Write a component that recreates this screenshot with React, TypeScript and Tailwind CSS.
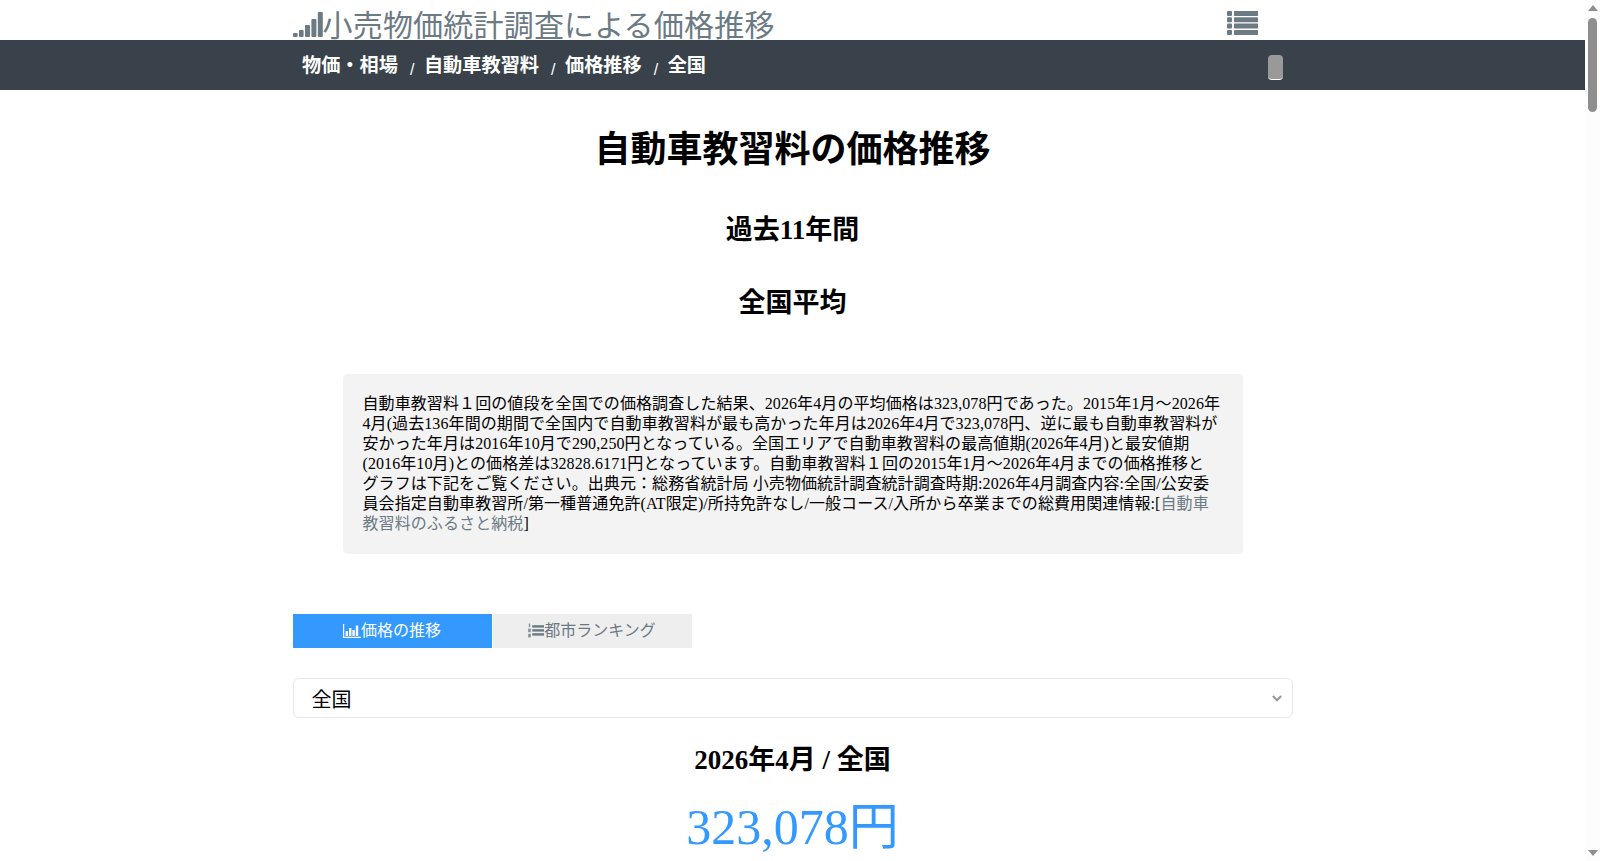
import React from 'react';

const ChartIcon: React.FC<{ className?: string }> = ({ className }) => (
  <svg viewBox="0 0 18 14" className={className} fill="currentColor">
    <path d="M0 0h1.2v12.8H18V14H0z" />
    <rect x="2.6" y="7" width="2.4" height="5" />
    <rect x="6" y="4" width="2.4" height="8" />
    <rect x="9.4" y="6" width="2.4" height="6" />
    <rect x="12.8" y="1.5" width="2.4" height="10.5" />
  </svg>
);

const RankIcon: React.FC<{ className?: string }> = ({ className }) => (
  <svg viewBox="0 0 16 15" className={className} fill="currentColor">
    <rect x="0.8" y="0.5" width="1.4" height="3.6" opacity="0.8" />
    <rect x="0.2" y="5.6" width="2.6" height="3.6" opacity="0.8" />
    <rect x="0.2" y="10.8" width="2.6" height="3.6" opacity="0.8" />
    <rect x="4.2" y="2.2" width="11.8" height="2.4" />
    <rect x="4.2" y="6.2" width="11.8" height="2.4" />
    <rect x="4.2" y="10.2" width="11.8" height="2.4" />
  </svg>
);

const SignalIcon = () => (
  <svg viewBox="0 0 30 25" className="w-[30px] h-[25px] shrink-0 mt-[12px]" fill="#6c7a84">
    <rect x="0" y="21" width="4.6" height="4" rx="1" />
    <rect x="6" y="18" width="4.6" height="7" rx="1" />
    <rect x="12" y="13" width="5" height="12" rx="1" />
    <rect x="18.4" y="7" width="5" height="18" rx="1" />
    <rect x="24.8" y="0" width="5" height="25" rx="1" />
  </svg>
);

const ListIcon = () => (
  <svg viewBox="0 0 31 24" className="w-[31px] h-[24px]" fill="#6c7a84">
    <rect x="0" y="0" width="5" height="5" rx="1" />
    <rect x="0" y="6.3" width="5" height="5" rx="1" />
    <rect x="0" y="12.6" width="5" height="5" rx="1" />
    <rect x="0" y="19" width="5" height="5" rx="1" />
    <rect x="7" y="0" width="24" height="5" rx="0.5" />
    <rect x="7" y="6.3" width="24" height="5" rx="0.5" />
    <rect x="7" y="12.6" width="24" height="5" rx="0.5" />
    <rect x="7" y="19" width="24" height="5" rx="0.5" />
  </svg>
);

// the browser's own scrollbar, hidden in the headless shot
const Scrollbar = () => (
  <aside className="w-[15px] shrink-0 h-full bg-[#fdfdfd] flex flex-col items-center">
    <svg viewBox="0 0 10 6" className="w-[10px] h-[6px] mt-[5px]" fill="#8e8e8e">
      <path d="M5 0l5 6H0z" />
    </svg>
    <div className="w-[9px] h-[94px] mt-[7px] rounded-full bg-[#8e8e8e]" />
    <svg viewBox="0 0 10 6" className="w-[10px] h-[6px] mt-auto mb-[5px]" fill="#8e8e8e">
      <path d="M0 0h10L5 6z" />
    </svg>
  </aside>
);

const crumbs = ['物価・相場', '自動車教習料', '価格推移', '全国'];

export default function App() {
  return (
    <div className="h-screen flex overflow-hidden bg-white text-black font-['Liberation_Serif','Noto_Sans_CJK_JP',serif]">
      <div className="flex-1 min-w-0">
        {/* Header */}
        <header className="w-[1000px] mx-auto h-10 flex justify-between overflow-hidden">
          <a className="flex items-start text-[30px] leading-[52px] text-[#6c7a84] font-['Liberation_Sans','Noto_Sans_CJK_JP',sans-serif]">
            <SignalIcon />
            <span className="tracking-[0.2px]">小売物価統計調査による価格推移</span>
          </a>
          <div className="mr-[35px] mt-[11px]">
            <ListIcon />
          </div>
        </header>

        <nav className="h-[50px] bg-[#39424a]">
          <div className="w-[1000px] mx-auto flex justify-between h-full">
            <ol className="flex items-start pt-[12px] pl-[9.5px] text-white font-bold text-[19.2px] leading-[28px] font-['Liberation_Sans','Noto_Sans_CJK_JP',sans-serif]">
              {crumbs.map((c, i) => (
                <li key={c} className="flex">
                  {i > 0 && <span className="pl-[12px] pr-[9.5px] font-normal text-[16px] mt-[4px]">/</span>}
                  <span>{c}</span>
                </li>
              ))}
            </ol>
            <div className="mr-[10px] mt-[15px] w-[15px] h-[25px] rounded-[4px] bg-[#999999] border-b border-white" />
          </div>
        </nav>

        <main className="w-[1000px] mx-auto">
          <h1 className="text-center font-bold text-[36px] leading-[42px] pt-[39px]">自動車教習料の価格推移</h1>
          <h2 className="text-center font-bold text-[27px] leading-[31px] mt-[44px]">過去11年間</h2>
          <h2 className="text-center font-bold text-[27px] leading-[31px] mt-[42px]">全国平均</h2>

          <p className="w-[900px] mx-auto mt-[55px] px-[20px] py-[20px] rounded-[5px] bg-[#f3f3f3] text-[16px] leading-[20px] tracking-[0.09px] whitespace-nowrap">
            自動車教習料１回の値段を全国での価格調査した結果、2026年4月の平均価格は323,078円であった。2015年1月～2026年<br />
            4月(過去136年間の期間で全国内で自動車教習料が最も高かった年月は2026年4月で323,078円、逆に最も自動車教習料が<br />
            安かった年月は2016年10月で290,250円となっている。全国エリアで自動車教習料の最高値期(2026年4月)と最安値期<br />
            (2016年10月)との価格差は32828.6171円となっています。自動車教習料１回の2015年1月～2026年4月までの価格推移と<br />
            グラフは下記をご覧ください。出典元：総務省統計局 小売物価統計調査統計調査時期:2026年4月調査内容:全国/公安委<br />
            員会指定自動車教習所/第一種普通免許(AT限定)/所持免許なし/一般コース/入所から卒業までの総費用関連情報:[<a className="text-[#6c7a84]">自動車<br />教習料のふるさと納税</a>]
          </p>

          <div className="flex gap-[1px] mt-[60px] text-[16px]">
            <button className="w-[199px] h-[34px] flex items-center justify-center bg-[#3399ff] text-white">
              <ChartIcon className="w-[18px] h-[14px]" />
              価格の推移
            </button>
            <button className="w-[199px] h-[34px] flex items-center justify-center bg-[#eeeeee] text-[#6c7a84]">
              <RankIcon className="w-[16px] h-[15px] -mt-[1px]" />
              都市ランキング
            </button>
          </div>

          <div className="mt-[30px] h-[40px] border border-[#e8e8e8] rounded-[6px] flex items-center justify-between pl-[18px] pr-[10px] text-[20px]">
            <span className="pt-[3px]">全国</span>
            <svg viewBox="0 0 12 8" className="w-[10px] h-[7px]" fill="none" stroke="#999999" strokeWidth="2.6">
              <path d="M1 1l5 5 5-5" />
            </svg>
          </div>

          <h3 className="text-center font-bold text-[27px] leading-[31px] mt-[27px]">2026年4月 / 全国</h3>
          <div className="text-center text-[50px] leading-[58px] mt-[22px] text-[#3399ff]">323,078円</div>
        </main>
      </div>
      <Scrollbar />
    </div>
  );
}
